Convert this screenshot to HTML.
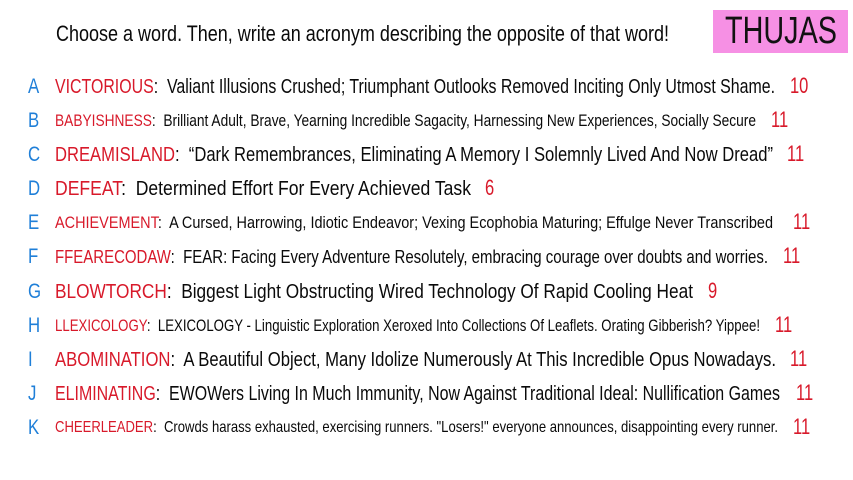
<!DOCTYPE html>
<html><head><meta charset="utf-8"><style>
body{margin:0;width:853px;height:480px;background:#fff;position:relative;overflow:hidden;font-family:"Liberation Sans Narrow","Liberation Sans",sans-serif;color:#0a0a0a}
.l{position:absolute;white-space:nowrap;transform-origin:0 50%;line-height:1}
.r{color:#d8192a}
.b{color:#1f7fd8;transform:scaleX(0.8)}
#box{position:absolute;left:713px;top:10px;width:135px;height:43px;background:#f690e4}
</style></head><body>
<div id="box"></div>
<div class="l f" style="left:56px;top:23px;font-size:22px">Choose a word. Then, write an acronym describing the opposite of that word!</div>
<div class="l f" style="left:725px;top:12px;font-size:38px;color:#111">THUJAS</div>

<div class="l b" style="left:28px;top:76px;font-size:21px">A</div>
<div class="l f" style="left:55px;top:77px;font-size:20px"><span class="r">VICTORIOUS</span>:&nbsp; Valiant Illusions Crushed; Triumphant Outlooks Removed Inciting Only Utmost Shame.</div>
<div class="l f r" style="left:790px;top:75px;font-size:22px">10</div>

<div class="l b" style="left:28px;top:110px;font-size:21px">B</div>
<div class="l f" style="left:55px;top:112px;font-size:17px"><span class="r">BABYISHNESS</span>:&nbsp; Brilliant Adult, Brave, Yearning Incredible Sagacity, Harnessing New Experiences, Socially Secure</div>
<div class="l f r" style="left:771px;top:109px;font-size:22px">11</div>

<div class="l b" style="left:28px;top:144px;font-size:21px">C</div>
<div class="l f" style="left:55px;top:145px;font-size:20px"><span class="r">DREAMISLAND</span>:&nbsp; “Dark Remembrances, Eliminating A Memory I Solemnly Lived And Now Dread”</div>
<div class="l f r" style="left:787px;top:143px;font-size:22px">11</div>

<div class="l b" style="left:28px;top:178px;font-size:21px">D</div>
<div class="l f" style="left:55px;top:179px;font-size:20px"><span class="r">DEFEAT</span>:&nbsp; Determined Effort For Every Achieved Task</div>
<div class="l f r" style="left:485px;top:177px;font-size:22px">6</div>

<div class="l b" style="left:28px;top:212px;font-size:21px">E</div>
<div class="l f" style="left:55px;top:214px;font-size:17px"><span class="r">ACHIEVEMENT</span>:&nbsp; A Cursed, Harrowing, Idiotic Endeavor; Vexing Ecophobia Maturing; Effulge Never Transcribed</div>
<div class="l f r" style="left:793px;top:211px;font-size:22px">11</div>

<div class="l b" style="left:28px;top:246px;font-size:21px">F</div>
<div class="l f" style="left:55px;top:248px;font-size:18px"><span class="r">FFEARECODAW</span>:&nbsp; FEAR: Facing Every Adventure Resolutely, embracing courage over doubts and worries.</div>
<div class="l f r" style="left:783px;top:245px;font-size:22px">11</div>

<div class="l b" style="left:28px;top:281px;font-size:21px">G</div>
<div class="l f" style="left:55px;top:282px;font-size:20px"><span class="r">BLOWTORCH</span>:&nbsp; Biggest Light Obstructing Wired Technology Of Rapid Cooling Heat</div>
<div class="l f r" style="left:708px;top:280px;font-size:22px">9</div>

<div class="l b" style="left:28px;top:315px;font-size:21px">H</div>
<div class="l f" style="left:55px;top:317px;font-size:17px"><span class="r">LLEXICOLOGY</span>:&nbsp; LEXICOLOGY - Linguistic Exploration Xeroxed Into Collections Of Leaflets. Orating Gibberish? Yippee!</div>
<div class="l f r" style="left:775px;top:314px;font-size:22px">11</div>

<div class="l b" style="left:28px;top:349px;font-size:21px">I</div>
<div class="l f" style="left:55px;top:350px;font-size:20px"><span class="r">ABOMINATION</span>:&nbsp; A Beautiful Object, Many Idolize Numerously At This Incredible Opus Nowadays.</div>
<div class="l f r" style="left:790px;top:348px;font-size:22px">11</div>

<div class="l b" style="left:28px;top:383px;font-size:21px">J</div>
<div class="l f" style="left:55px;top:384px;font-size:20px"><span class="r">ELIMINATING</span>:&nbsp; EWOWers Living In Much Immunity, Now Against Traditional Ideal: Nullification Games</div>
<div class="l f r" style="left:796px;top:382px;font-size:22px">11</div>

<div class="l b" style="left:28px;top:417px;font-size:21px">K</div>
<div class="l f" style="left:55px;top:420px;font-size:16px"><span class="r">CHEERLEADER</span>:&nbsp; Crowds harass exhausted, exercising runners. "Losers!" everyone announces, disappointing every runner.</div>
<div class="l f r" style="left:793px;top:416px;font-size:22px">11</div>

<script>
var els=document.querySelectorAll('.f');
var targets=[613,112,720,null,701,null,718,null,416,null,718,null,713,null,638,null,705,null,721,null,725,null,723,null];
els.forEach(function(e,i){
  var t=targets[i];
  if(t==null){e.style.transform='scaleX(0.75)';return;}
  var w=e.getBoundingClientRect().width;
  if(w>0)e.style.transform='scaleX('+(t/w)+')';
});
</script>
</body></html>
